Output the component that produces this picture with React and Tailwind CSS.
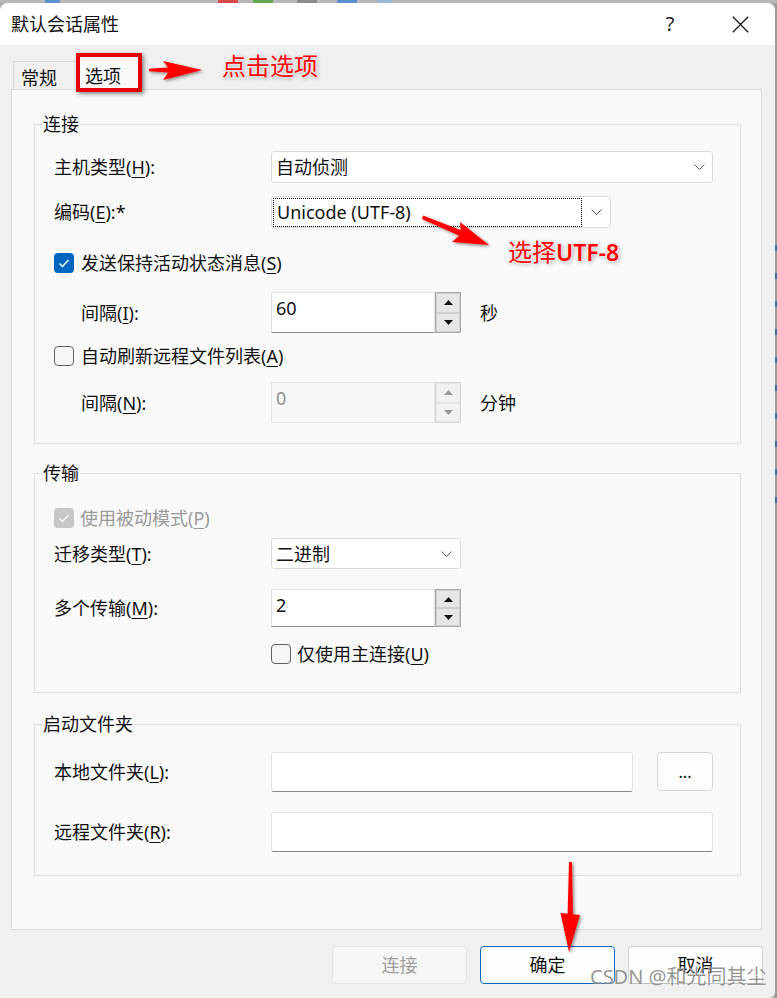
import React from "react";

const FONT = "font-['Noto_Sans','Noto_Sans_CJK_SC',sans-serif]";

function U({ children }) {
  return <span className="underline underline-offset-[3px] decoration-[1px]">{children}</span>;
}

function Label({ children, indent }) {
  return (
    <div className={`w-[236px] shrink-0 text-[18px] leading-[24px] ${indent ? "pl-[46px]" : "pl-[19px]"}`}>
      {children}
    </div>
  );
}

function Chevron() {
  return (
    <svg width="11" height="6" viewBox="0 0 11 6">
      <path d="M0.5 0.5 L5.5 5.5 L10.5 0.5" fill="none" stroke="#5a5a5a" strokeWidth="1" />
    </svg>
  );
}

function Tri({ up, color }) {
  return (
    <svg width="9" height="5" viewBox="0 0 9 5">
      <polygon points={up ? "0,5 4.5,0 9,5" : "0,0 4.5,5 9,0"} fill={color} />
    </svg>
  );
}

function Spin({ value, disabled, h }) {
  return (
    <div className={`flex w-[190px] ${h}`}>
      <div
        className={`flex-1 border pl-[4px] pt-[3px] text-[18px] leading-[24px] ${
          disabled
            ? "bg-[#f7f7f7] border-[#e4e4e4] text-[#8e8e8e]"
            : "bg-white border-[#e2e2e2] border-b-[#8c8c8c]"
        }`}
      >
        {value}
      </div>
      <div className={`w-[26px] flex flex-col border ${disabled ? "border-[#dadada] bg-[#f4f4f4]" : "border-[#a9a9a9] bg-[#f0f0f0]"}`}>
        <div className={`flex-1 flex items-center justify-center border ${disabled ? "border-[#e6e6e6] bg-[#f2f2f2]" : "border-[#cfcfcf] bg-[#e6e6e6]"}`}>
          <Tri up color={disabled ? "#9a9a9a" : "#111"} />
        </div>
        <div className={`flex-1 flex items-center justify-center border ${disabled ? "border-[#e6e6e6] bg-[#f2f2f2]" : "border-[#cfcfcf] bg-[#e6e6e6]"}`}>
          <Tri color={disabled ? "#9a9a9a" : "#111"} />
        </div>
      </div>
    </div>
  );
}

function Check({ checked, disabled }) {
  if (disabled) {
    return (
      <div className="w-[20px] h-[20px] shrink-0 rounded-[4px] bg-[#c6c6c6] flex items-center justify-center">
        <svg width="20" height="20" viewBox="0 0 20 20">
          <path d="M5.5 10.5 L8.5 13.5 L14.5 7" fill="none" stroke="#fff" strokeWidth="1.2" />
        </svg>
      </div>
    );
  }
  if (checked) {
    return (
      <div className="w-[20px] h-[20px] shrink-0 rounded-[4px] bg-[#0067c0] flex items-center justify-center">
        <svg width="20" height="20" viewBox="0 0 20 20">
          <path d="M5.5 10.5 L8.5 13.5 L14.5 7" fill="none" stroke="#fff" strokeWidth="1.3" />
        </svg>
      </div>
    );
  }
  return <div className="w-[20px] h-[20px] shrink-0 rounded-[4px] border border-[#616161] bg-[#f5f5f5]" />;
}

function Legend({ children }) {
  return <legend className="ml-[7px] px-[1px] text-[18px] leading-[22px]">{children}</legend>;
}

export default function App() {
  return (
    <div className={`relative w-[777px] h-[998px] overflow-hidden bg-[#a8a8a8] text-[#111] ${FONT}`}>
      {/* desktop strip above the window */}
      <div className="h-[3px] flex bg-[#b8b8b8]">
        <div className="w-[45px]" />
        <div className="w-[15px] bg-[#5b8fd0]" />
        <div className="w-[158px]" />
        <div className="w-[20px] bg-[#d94848]" />
        <div className="w-[15px]" />
        <div className="w-[20px] bg-[#6aa84f]" />
        <div className="w-[24px]" />
        <div className="w-[20px] bg-[#8c8c8c]" />
        <div className="w-[20px]" />
        <div className="w-[20px] bg-[#5b8fd0]" />
        <div className="w-[20px]" />
        <div className="w-[15px] bg-[#9bb8dc]" />
      </div>

      <div className="flex h-[995px]">
        <div className="w-[775px] h-full bg-[#f0f0f0] rounded-t-[8px] rounded-br-[6px] flex flex-col overflow-hidden">
          {/* title bar */}
          <div className="h-[42px] shrink-0 bg-white flex items-center">
            <div className="pl-[11px] text-[18px] leading-[24px]">默认会话属性</div>
            <div className="ml-auto w-[40px] flex justify-center text-[20px] leading-[24px] text-[#222]">?</div>
            <div className="ml-[30px] w-[40px] flex justify-center">
              <svg width="17" height="17" viewBox="0 0 17 17">
                <path d="M0.8 0.8 L16.2 16.2 M16.2 0.8 L0.8 16.2" stroke="#1a1a1a" strokeWidth="1.3" />
              </svg>
            </div>
            <div className="w-[15px]" />
          </div>

          {/* tabs */}
          <div className="h-[44px] shrink-0 flex items-end pl-[13px]">
            <div className="w-[64px] h-[28px] border-t border-l border-[#d9d9d9] bg-[#f0f0f0] pl-[7px] pt-[4px] text-[18px] leading-[24px]">
              常规
            </div>
            <div className="relative z-10 -mb-px ml-[-1px] w-[66px] h-[34px] border border-b-0 border-[#d9d9d9] bg-[#f9f9f9] pl-[8px] pt-[7px] text-[18px] leading-[24px]">
              选项
            </div>
          </div>

          {/* tab page */}
          <div className="ml-[11px] w-[751px] h-[841px] shrink-0 border border-[#dcdcdc] bg-[#f9f9f9] pl-[22px] pt-[23px]">
            {/* 连接 */}
            <fieldset className="w-[707px] border border-[#dcdcdc] pb-[20px]">
              <Legend>连接</Legend>
              <div className="flex items-center h-[32px] mt-[16px]">
                <Label>
                  主机类型(<U>H</U>):
                </Label>
                <div className="w-[442px] h-full bg-white border border-[#dadada] rounded-[3px] flex items-center">
                  <div className="flex-1 pl-[4px] text-[18px] leading-[24px]">自动侦测</div>
                  <div className="w-[26px] flex justify-center">
                    <Chevron />
                  </div>
                </div>
              </div>
              <div className="flex items-center h-[32px] mt-[13px]">
                <Label>
                  编码(<U>E</U>):*
                </Label>
                <div className="w-[340px] h-full bg-white border border-[#dadada] rounded-[3px] flex items-center">
                  <div className="flex-1 ml-px h-[29px] border border-dotted border-black flex items-center pl-[3px] text-[18px] leading-[24px]">
                    Unicode (UTF-8)
                  </div>
                  <div className="w-[28px] flex justify-center">
                    <Chevron />
                  </div>
                </div>
              </div>
              <div className="flex items-center h-[20px] mt-[25px] pl-[19px] gap-[7px]">
                <Check checked />
                <div className="text-[18px] leading-[24px]">
                  发送保持活动状态消息(<U>S</U>)
                </div>
              </div>
              <div className="flex items-center h-[41px] mt-[19px]">
                <Label indent>
                  间隔(<U>I</U>):
                </Label>
                <Spin value="60" h="h-[41px]" />
                <div className="ml-[19px] text-[18px] leading-[24px]">秒</div>
              </div>
              <div className="flex items-center h-[20px] mt-[13px] pl-[19px] gap-[7px]">
                <Check />
                <div className="text-[18px] leading-[24px]">
                  自动刷新远程文件列表(<U>A</U>)
                </div>
              </div>
              <div className="flex items-center h-[41px] mt-[16px]">
                <Label indent>
                  间隔(<U>N</U>):
                </Label>
                <Spin value="0" disabled h="h-[41px]" />
                <div className="ml-[19px] text-[18px] leading-[24px]">分钟</div>
              </div>
            </fieldset>

            {/* 传输 */}
            <fieldset className="w-[707px] mt-[18px] border border-[#dcdcdc] pb-[28px]">
              <Legend>传输</Legend>
              <div className="flex items-center h-[20px] mt-[24px] pl-[19px] gap-[6px]">
                <Check disabled />
                <div className="text-[18px] leading-[24px] text-[#9a9a9a]">
                  使用被动模式(<U>P</U>)
                </div>
              </div>
              <div className="flex items-center h-[31px] mt-[10px]">
                <Label>
                  迁移类型(<U>T</U>):
                </Label>
                <div className="w-[190px] h-full bg-white border border-[#dadada] rounded-[3px] flex items-center">
                  <div className="flex-1 pl-[4px] text-[18px] leading-[24px]">二进制</div>
                  <div className="w-[28px] flex justify-center">
                    <Chevron />
                  </div>
                </div>
              </div>
              <div className="flex items-center h-[38px] mt-[20px]">
                <Label>
                  多个传输(<U>M</U>):
                </Label>
                <Spin value="2" h="h-[38px]" />
              </div>
              <div className="flex items-center h-[20px] mt-[17px] pl-[236px] gap-[6px]">
                <Check />
                <div className="text-[18px] leading-[24px]">
                  仅使用主连接(<U>U</U>)
                </div>
              </div>
            </fieldset>

            {/* 启动文件夹 */}
            <fieldset className="w-[707px] mt-[20px] border border-[#dcdcdc] pb-[23px]">
              <Legend>启动文件夹</Legend>
              <div className="flex items-center h-[40px] mt-[17px]">
                <Label>
                  本地文件夹(<U>L</U>):
                </Label>
                <div className="w-[362px] h-[40px] bg-white border border-[#e4e4e4] border-b-[#878787] rounded-[3px]" />
                <div className="ml-[24px] w-[56px] h-[39px] self-start rounded-[4px] border border-[#d6d6d6] bg-[#fdfdfd] flex items-center justify-center text-[16px] leading-[20px]">
                  ...
                </div>
              </div>
              <div className="flex items-center h-[40px] mt-[20px]">
                <Label>
                  远程文件夹(<U>R</U>):
                </Label>
                <div className="w-[442px] h-[40px] bg-white border border-[#e4e4e4] border-b-[#878787] rounded-[3px]" />
              </div>
            </fieldset>
          </div>

          {/* dialog buttons */}
          <div className="mt-[16px] flex justify-end gap-[13px] pr-[12px]">
            <div className="w-[135px] h-[38px] rounded-[4px] border border-[#e6e6e6] bg-[#f6f6f6] flex items-center justify-center text-[18px] text-[#9e9e9e]">
              连接
            </div>
            <div className="w-[135px] h-[38px] rounded-[4px] border border-[#0067c0] bg-[#fdfdfd] flex items-center justify-center text-[18px]">
              确定
            </div>
            <div className="w-[135px] h-[38px] rounded-[4px] border border-[#d5d5d5] border-b-[#bdbdbd] bg-[#fdfdfd] flex items-center justify-center text-[18px]">
              取消
            </div>
          </div>
        </div>

        {/* desktop edge to the right */}
        <div className="w-[2px] h-full bg-[#9c9c9c] flex flex-col pt-[242px] gap-[22px]">
          <div className="h-[6px] bg-[#3d6ea8]" />
          <div className="h-[6px] bg-[#3d6ea8]" />
          <div className="h-[6px] bg-[#3d6ea8]" />
          <div className="h-[6px] bg-[#3d6ea8]" />
          <div className="h-[6px] bg-[#3d6ea8]" />
          <div className="h-[6px] bg-[#3d6ea8]" />
          <div className="h-[6px] bg-[#3d6ea8]" />
          <div className="h-[6px] bg-[#3d6ea8]" />
          <div className="h-[6px] bg-[#3d6ea8]" />
          <div className="h-[6px] bg-[#3d6ea8]" />
        </div>
      </div>

      {/* annotations */}
      <div className="absolute z-20 left-[76px] top-[53px] w-[66px] h-[39px] border-4 border-solid border-[#e60000] shadow-[2px_2px_4px_rgba(0,0,0,0.45)]" />
      <div className="absolute z-20 left-[222px] top-[50px] text-[24px] leading-[32px] text-[#ff0000] [text-shadow:0_0_2px_#fff,0_0_3px_#fff,1px_1px_4px_rgba(0,0,0,0.45)]">
        点击选项
      </div>
      <div className="absolute z-20 left-[508px] top-[236px] text-[24px] leading-[32px] text-[#ff0000] [text-shadow:0_0_2px_#fff,0_0_3px_#fff,1px_1px_4px_rgba(0,0,0,0.45)]">
        选择<span className="font-semibold text-[23px]">UTF-8</span>
      </div>
      <svg className="absolute z-20 left-0 top-0 pointer-events-none" width="777" height="998" viewBox="0 0 777 998">
        <defs>
          <filter id="sh" x="-20%" y="-20%" width="140%" height="140%">
            <feDropShadow dx="1.5" dy="1.5" stdDeviation="1.5" floodColor="#000" floodOpacity="0.45" />
          </filter>
        </defs>
        <g fill="#ff0000" filter="url(#sh)">
          <polygon points="149,68.8 171,67.2 171,72.8 149,71.2" />
          <polygon points="163,61 202,70 163,80 170,70" />
          <polygon points="423,215.5 463,231 460,236 422,219" />
          <polygon points="460,222 489,245 452,242 461,234" />
          <polygon points="569,862 572,862 573,918 567.5,918" />
          <polygon points="560.5,913 580,915 569,952" />
        </g>
      </svg>
      <div className="absolute z-20 left-[590px] top-[964px] text-[20px] leading-[26px] text-[rgba(120,120,120,0.78)] [text-shadow:0_0_2px_rgba(255,255,255,0.8)]">
        CSDN @和光同其尘
      </div>
    </div>
  );
}
